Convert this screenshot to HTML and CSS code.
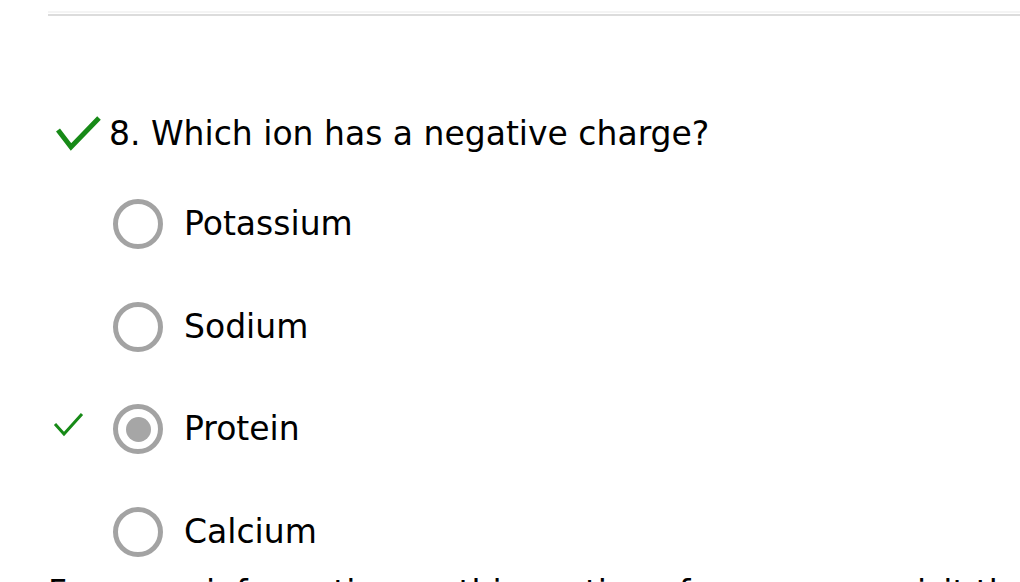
FILE: index.html
```html
<!DOCTYPE html>
<html lang="en">
<head>
<meta charset="utf-8">
<title>Quiz question 8</title>
<link rel="stylesheet" href="styles.css">
</head>
<body>
<div class="page">
  <div class="rule"></div>
  <div class="question">
    <svg class="q-check" width="61" height="38" viewBox="0 0 61 38" aria-hidden="true">
      <path d="M10 15 L23 32 L51 3" fill="none" stroke="#178a17" stroke-width="5" stroke-linecap="butt" stroke-linejoin="miter"/>
    </svg>
    <span class="q-text">8. Which ion has a negative charge?</span>
  </div>
  <ul class="options">
    <li class="option">
      <span class="mark"></span>
      <span class="radio"></span>
      <span class="label">Potassium</span>
    </li>
    <li class="option">
      <span class="mark"></span>
      <span class="radio"></span>
      <span class="label">Sodium</span>
    </li>
    <li class="option">
      <span class="mark">
        <svg width="65" height="50" viewBox="0 0 65 50" aria-hidden="true">
          <path d="M7 20 L16 30 L34 10" fill="none" stroke="#178a17" stroke-width="3"/>
        </svg>
      </span>
      <span class="radio selected"></span>
      <span class="label">Protein</span>
    </li>
    <li class="option">
      <span class="mark"></span>
      <span class="radio"></span>
      <span class="label">Calcium</span>
    </li>
  </ul>
  <p class="footnote">For more information on this section of our course, visit the help center</p>
</div>
</body>
</html>
```
FILE: styles.css
```css
html, body {
  margin: 0;
  padding: 0;
  background: #ffffff;
  overflow: hidden;
}
body {
  width: 1020px;
  height: 582px;
  font-family: "DejaVu Sans", Verdana, sans-serif;
  color: #000;
}
.page {
  padding: 14px 0 0 48px;
}
.rule {
  height: 2px;
  background: #dcdcdc;
  box-shadow: 0 -3px 0 #f4f4f4;
}
.question {
  display: flex;
  align-items: flex-start;
  margin-top: 99px;
  height: 38px;
}
.q-check {
  display: block;
  flex: none;
}
.q-text {
  font-size: 33px;
  line-height: 38px;
  white-space: nowrap;
}
.options {
  list-style: none;
  margin: 46px 0 0 0;
  padding: 0;
  display: flex;
  flex-direction: column;
  gap: 52.5px;
}
.option {
  display: flex;
  align-items: center;
  height: 50px;
}
.mark {
  width: 65px;
  height: 50px;
  flex: none;
}
.mark svg {
  display: block;
}
.radio {
  width: 50px;
  height: 50px;
  box-sizing: border-box;
  border: 5px solid #a3a3a3;
  border-radius: 50%;
  flex: none;
  display: flex;
  align-items: center;
  justify-content: center;
}
.radio.selected::after {
  content: "";
  width: 25px;
  height: 25px;
  border-radius: 50%;
  background: #a6a6a6;
}
.label {
  margin-left: 21px;
  font-size: 33px;
  line-height: 38px;
  white-space: nowrap;
}
.footnote {
  margin: 17px 0 0 0;
  font-size: 33px;
  line-height: 38px;
  white-space: nowrap;
}
```
